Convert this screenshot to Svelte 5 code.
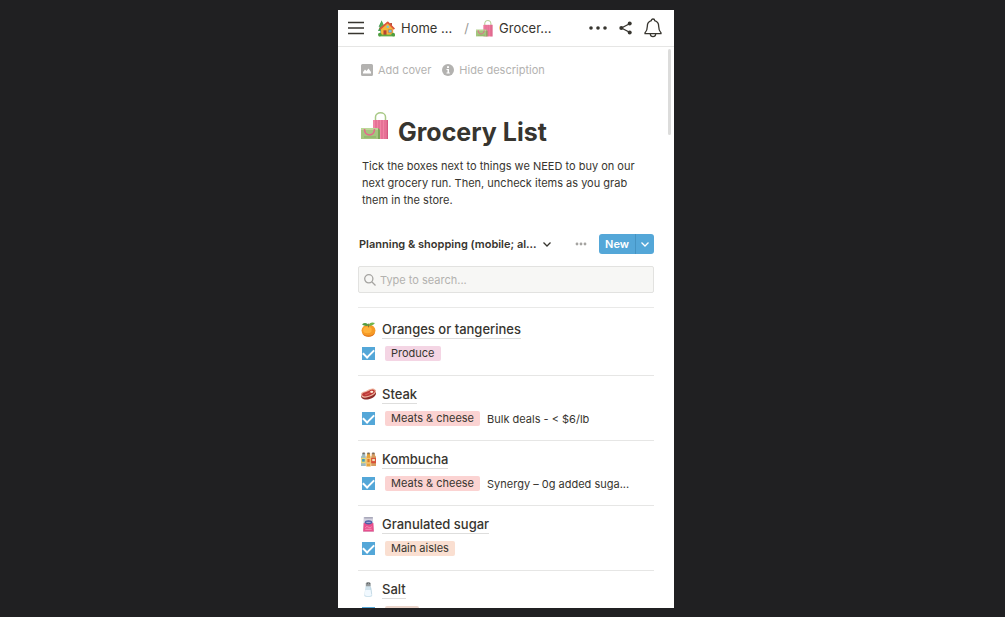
<script lang="ts">
  type Item = { icon: string; name: string; tag: string; color: string; note?: string; checked: boolean };

  let search = $state('');
  let items: Item[] = $state([
    { icon: 'orange', name: 'Oranges or tangerines', tag: 'Produce', color: 'pink', checked: true },
    { icon: 'steak', name: 'Steak', tag: 'Meats & cheese', color: 'red', note: 'Bulk deals - < $6/lb', checked: true },
    { icon: 'kombucha', name: 'Kombucha', tag: 'Meats & cheese', color: 'red', note: 'Synergy – 0g added suga...', checked: true },
    { icon: 'sugar', name: 'Granulated sugar', tag: 'Main aisles', color: 'orange', checked: true },
    { icon: 'salt', name: 'Salt', tag: 'Bulk', color: 'brown', checked: true }
  ]);

  let visible = $derived(items.filter((i) => i.name.toLowerCase().includes(search.toLowerCase())));
</script>

{#snippet bags()}
  <svg class="emoji" viewBox="0 0 28 28" aria-hidden="true">
    <path d="M14.500 9V5a5 4.200 0 0 1 10 0v4" fill="none" stroke="#a9c987" stroke-width="1.500" />
    <path d="M12 8h15v19H12z" fill="#f084a4" />
    <path d="M15 8v19M18 8v19M21 8v19M24 8v19" stroke="#dc5f88" stroke-width="1" />
    <path d="M25.500 8H27v19h-1.500z" fill="#d4567f" />
    <path d="M0 16h17v11H0z" fill="#a4c67e" />
    <path d="M17 16l2 2v9h-2z" fill="#7fa65a" />
    <path d="M0 16h17v2H0z" fill="#bdd798" />
    <path d="M3.500 17c0 8 10 8 10 0" fill="none" stroke="#e4688c" stroke-width="1.600" />
    <path d="M3 25h12" stroke="#86ad62" stroke-width="1" />
  </svg>
{/snippet}

{#snippet house()}
  <svg class="emoji" viewBox="0 0 28 28" aria-hidden="true">
    <path d="M6 1L1 11h2l-3 7h4v7h4V9z" fill="#3f9a4e" />
    <path d="M6 1l4 8-2 9H2l3-7H3z" fill="#55ad5a" />
    <path d="M5 14L16 5l9 9v12H5z" fill="#f5b63b" />
    <path d="M20 5h3v6l-3-3z" fill="#b5503a" />
    <path d="M3 15L16 4l11 11" fill="none" stroke="#dd5638" stroke-width="3" stroke-linejoin="round" />
    <path d="M9 17h5v9H9z" fill="#b64531" />
    <path d="M17 16h6v5h-6z" fill="#6ec3e4" stroke="#d1683a" />
    <circle cx="16" cy="11" r="2" fill="#76c7de" />
    <path d="M1 24h27v3H1z" fill="#65ac42" />
    <circle cx="3" cy="24" r="3" fill="#4e9e42" />
    <circle cx="25" cy="24" r="3" fill="#4e9e42" />
  </svg>
{/snippet}

{#snippet foodIcon(name: string)}
  <svg class="emoji" viewBox="0 0 28 28" aria-hidden="true">
    {#if name === 'orange'}
      <ellipse cx="14" cy="16" rx="13" ry="11.500" fill="#f69a26" />
      <ellipse cx="12" cy="15" rx="8" ry="6" fill="#ffb13b" />
      <path d="M2 21c6 6 18 6 24-1-2 10-20 10-24 1z" fill="#dd741d" />
      <path d="M14 7C8 8 4 6 2 4c5-4 11-2 12 3z" fill="#549b42" />
      <path d="M14 7c1-6 7-7 12-5-3 4-7 6-12 5z" fill="#72b54b" />
      <path d="M14 10V3" stroke="#6f7434" stroke-width="1.500" />
    {:else if name === 'steak'}
      <path d="M0 16c0-6 6-5 11-8s12-6 16-2 0 12-7 15S0 26 0 16z" fill="#8e2c29" />
      <path d="M0 14c0-6 7-5 12-8s11-5 15-1-2 9-8 12S0 23 0 14z" fill="#efb6a0" />
      <path d="M2 14c1-4 7-4 11-6s9-5 12-2-2 7-7 9S3 20 2 14z" fill="#bd3a37" />
      <path d="M8 14c4 0 7-3 10-4" fill="none" stroke="#df716b" stroke-width="1.500" />
      <ellipse cx="20" cy="9" rx="3" ry="2" fill="#fff0db" />
    {:else if name === 'kombucha'}
      <path d="M2 2h6v4l1 3v17H0V9l2-3z" fill="#9fbac0" />
      <path d="M11 2h6v4l1 3v18h-8V9l1-3z" fill="#e7a33a" />
      <path d="M20 2h6v4l2 3v17h-9V9l1-3z" fill="#d69c60" />
      <path d="M3 1h4v3H3zM12 1h4v3h-4zM21 1h4v3h-4z" fill="#786c60" />
      <path d="M0 11h9v10H0z" fill="#e7d778" />
      <path d="M10 11h8v11h-8z" fill="#f4c170" />
      <path d="M19 11h9v10h-9z" fill="#d85038" />
      <path d="M2 13h5v5H2z" fill="#4399bc" />
      <path d="M12 13h4v6h-4z" fill="#da782a" />
      <path d="M21 13h5v4h-5z" fill="#eee1ba" />
    {:else if name === 'sugar'}
      <path d="M5 0h17l2 28H4z" fill="#d3d2e0" />
      <path d="M5 11h18l1 16H4z" fill="#e9508d" />
      <path d="M6 0h16v3H6z" fill="#a9a9ba" />
      <ellipse cx="14" cy="10" rx="7" ry="4" fill="#4d5fa7" />
      <path d="M10 10h8" stroke="#c7cdea" stroke-width="1.500" />
      <path d="M8 20c4-6 7 4 12-2M8 23h12" fill="none" stroke="#f6a4c3" stroke-width="1.500" />
    {:else}
      <path d="M9 7h9l1 4 2 14c0 4-15 4-15 0l2-14z" fill="#d0e3ed" />
      <path d="M8 15h11l1 9c-2 3-11 3-13 0z" fill="#f1f9ff" />
      <path d="M9 3c0-4 9-4 9 0v5H9z" fill="#94999b" />
      <path d="M11 3h2M15 3h2" stroke="#4d5254" stroke-width="1.500" />
      <path d="M18 10l2 13" stroke="#abc7d5" />
    {/if}
  </svg>
{/snippet}

{#snippet chevron()}
  <svg class="chevron" viewBox="0 0 10 10" aria-hidden="true">
    <path d="M1.500 3.500L5 7l3.500-3.500" fill="none" stroke="currentColor" stroke-width="1.300" />
  </svg>
{/snippet}

<main>
  <div class="phone">
    <header>
      <button class="bare" aria-label="Open sidebar">
        <svg class="burger" viewBox="0 0 16 14" aria-hidden="true">
          <path d="M0 1.500h16M0 7h16M0 12.500h16" stroke="currentColor" stroke-width="1.500" />
        </svg>
      </button>
      <nav aria-label="Breadcrumb">
        <a href="#home">{@render house()}Home ...</a>
        <span class="slash">/</span>
        <a href="#grocery">{@render bags()}Grocer...</a>
      </nav>
      <div class="actions">
        <button class="bare" aria-label="More">
          <svg class="dots" viewBox="0 0 18 4" aria-hidden="true">
            <circle cx="2" cy="2" r="1.800" /><circle cx="9" cy="2" r="1.800" /><circle cx="16" cy="2" r="1.800" />
          </svg>
        </button>
        <button class="bare" aria-label="Share">
          <svg class="share" viewBox="0 0 13 14" aria-hidden="true">
            <path d="M11 2.500L2.500 7l8.500 4.500" fill="none" stroke="currentColor" stroke-width="1.300" />
            <circle cx="10.700" cy="2.500" r="2" /><circle cx="2.300" cy="7" r="2" /><circle cx="10.700" cy="11.500" r="2" />
          </svg>
        </button>
        <button class="bare" aria-label="Notifications">
          <svg class="bell line" viewBox="0 0 18 20" aria-hidden="true">
            <path d="M7.300 2.700a1.700 1.700 0 0 1 3.400 0c2.800.8 4 3 4 5.800 0 4 .8 4.700 2.300 6.300v.9H1v-.9c1.500-1.600 2.300-2.300 2.300-6.300 0-2.800 1.200-5 4-5.800z" />
            <path d="M6.300 16c.3 3.600 5.100 3.600 5.400 0" />
          </svg>
        </button>
      </div>
    </header>

    <div class="scroller">
      <div class="thumb"></div>
      <div class="page-tools">
        <button class="bare">
          <svg viewBox="0 0 12 12" aria-hidden="true">
            <path fill-rule="evenodd" d="M1.500 0h9A1.500 1.500 0 0 1 12 1.500v9a1.500 1.500 0 0 1-1.500 1.500h-9A1.500 1.500 0 0 1 0 10.500v-9A1.500 1.500 0 0 1 1.500 0zM2 9.500h8V8L7.500 4.500 5.500 7 4 5.500 2 8z" />
          </svg>
          Add cover
        </button>
        <button class="bare">
          <svg viewBox="0 0 12 12" aria-hidden="true">
            <circle cx="6" cy="6" r="6" />
            <path d="M5 2.200h2v1.700H5zM4.500 5H7v3.500h.8v1H4.500v-1h1V6h-1z" fill="#fff" />
          </svg>
          Hide description
        </button>
      </div>

      <h1>{@render bags()}Grocery List</h1>
      <p class="description">
        Tick the boxes next to things we NEED to buy on our next grocery run. Then, uncheck items as you grab them in the store.
      </p>

      <div class="view-bar">
        <button class="bare view-name">Planning &amp; shopping (mobile; al... {@render chevron()}</button>
        <button class="bare view-more" aria-label="View options">
          <svg class="small-dots" viewBox="0 0 12 4" aria-hidden="true">
            <circle cx="2" cy="2" r="1.400" /><circle cx="6" cy="2" r="1.400" /><circle cx="10" cy="2" r="1.400" />
          </svg>
        </button>
        <div class="new">
          <button>New</button>
          <button class="new-more" aria-label="New from template">{@render chevron()}</button>
        </div>
      </div>

      <label class="search">
        <svg class="line" viewBox="0 0 12 12" aria-hidden="true">
          <circle cx="4.800" cy="4.800" r="4.100" /><path d="M8 8l3.500 3.500" />
        </svg>
        <input type="text" aria-label="Search" placeholder="Type to search..." bind:value={search} />
      </label>

      <ul>
        {#each visible as item (item.name)}
          <li>
            <div class="item-title">
              {@render foodIcon(item.icon)}
              <a href="#{item.icon}">{item.name}</a>
            </div>
            <div class="props">
              <input type="checkbox" aria-label={item.name} bind:checked={item.checked} />
              <span class="tag {item.color}">{item.tag}</span>
              {#if item.note}<span class="note">{item.note}</span>{/if}
            </div>
          </li>
        {/each}
      </ul>
    </div>
  </div>
</main>

<style>
  :global(body) { margin: 0; background: #202022; }
  * { box-sizing: border-box; }
  main {
    display: flex;
    justify-content: center;
    height: 100vh;
    padding: 10px 8px 9px 15px;
    font-family: Inter, "Liberation Sans", sans-serif;
    font-size: 11px;
    color: #37352f;
  }
  .phone {
    display: flex;
    flex-direction: column;
    width: 100%;
    max-width: 336px;
    background: #fff;
    overflow: hidden;
  }
  button, input { font: inherit; color: inherit; }
  a { color: inherit; text-decoration: none; }
  svg { display: block; flex: none; fill: currentColor; }
  .line { fill: none; stroke: currentColor; stroke-width: 1.3; stroke-linejoin: round; }
  .bare {
    display: flex;
    align-items: center;
    padding: 0;
    border: 0;
    background: none;
    cursor: pointer;
  }

  header {
    display: flex;
    align-items: center;
    flex: none;
    height: 37px;
    padding: 0 12px 0 10px;
    border-bottom: 1px solid #e6e6e5;
    font-size: 13px;
  }
  .burger { width: 16px; height: 14px; }
  nav { display: flex; align-items: center; flex: 1; padding-left: 14px; }
  nav a { display: flex; align-items: center; gap: 6px; white-space: nowrap; }
  nav .emoji { width: 17px; height: 17px; }
  .slash { padding: 0 7px 0 12px; color: #9b9a97; }
  .actions { display: flex; align-items: center; gap: 12px; }
  .dots { width: 18px; height: 4px; }
  .share { width: 13px; height: 14px; }
  .bell { width: 18px; height: 20px; }

  .scroller {
    position: relative;
    flex: 1;
    min-height: 0;
    padding: 0 20px;
    overflow: hidden;
  }
  .thumb {
    position: absolute;
    top: 2px;
    right: 3px;
    width: 3px;
    height: 86px;
    border-radius: 2px;
    background: #dcdcdb;
  }
  .page-tools {
    display: flex;
    gap: 11px;
    padding: 15px 0 0 3px;
    line-height: 16px;
    color: #b3b2b0;
  }
  .page-tools .bare { gap: 5px; }
  .page-tools svg { width: 12px; height: 12px; }

  h1 {
    display: flex;
    gap: 9px;
    margin: 34px 0 0;
    padding-left: 3px;
    font-size: 25px;
    line-height: 40px;
    font-weight: 700;
  }
  h1 .emoji { width: 28px; height: 28px; }
  .description { margin: 6px 0 0; padding: 0 12px 0 4px; line-height: 17px; }

  .view-bar { display: flex; align-items: center; margin-top: 25px; }
  .view-name { flex: 1; gap: 5px; padding-left: 1px; font-weight: 600; white-space: nowrap; }
  .chevron { width: 10px; height: 10px; }
  .view-more { padding: 0 12px; color: #a5a4a1; }
  .small-dots { width: 12px; height: 4px; }
  .new { display: flex; height: 20px; border-radius: 3px; background: #54a7d8; color: #fff; overflow: hidden; }
  .new button { padding: 0 6px; border: 0; background: none; font-weight: 600; }
  .new .new-more { padding: 0 4px; border-left: 1px solid #4594c3; }

  .search {
    display: flex;
    align-items: center;
    gap: 4px;
    height: 27px;
    margin-top: 12px;
    padding: 0 5px;
    border: 1px solid #e2e2e0;
    border-radius: 2px;
    background: #f7f7f5;
    color: #a5a4a1;
  }
  .search svg { width: 12px; height: 12px; }
  .search input { flex: 1; min-width: 0; padding: 0; border: 0; outline: 0; background: none; }
  .search input::placeholder { color: #b3b2af; opacity: 1; }

  ul { margin: 14px 0 0; padding: 3px 0 0; border-top: 1px solid #e9e9e8; list-style: none; }
  li { padding: 9px 0 14px 3px; border-bottom: 1px solid #e6e6e5; }
  .item-title { display: flex; align-items: center; gap: 6px; height: 19px; }
  .item-title .emoji { width: 15px; height: 15px; }
  .item-title a {
    border-bottom: 1px solid #dededd;
    font-size: 13px;
    line-height: 17px;
    font-weight: 500;
  }
  .props { display: flex; align-items: center; height: 15px; margin-top: 7px; white-space: nowrap; }
  input[type='checkbox'] {
    appearance: none;
    display: grid;
    place-items: center;
    width: 13px;
    height: 13px;
    margin: 0 10px 0 1px;
    border: 1px solid #54a7d8;
  }
  input[type='checkbox']:checked { background: #54a7d8; }
  input[type='checkbox']:checked::before {
    content: '';
    width: 9px;
    height: 5px;
    margin-bottom: 3px;
    border: solid #fff;
    border-width: 0 0 2px 2px;
    transform: rotate(-45deg);
  }
  .tag { padding: 0 6px; border-radius: 2px; line-height: 15px; }
  .pink { background: #f4d5e4; }
  .red { background: #fbd3d2; }
  .orange { background: #fadfd1; }
  .brown { background: #ebd5cb; }
  .note { padding-left: 7px; }
</style>
